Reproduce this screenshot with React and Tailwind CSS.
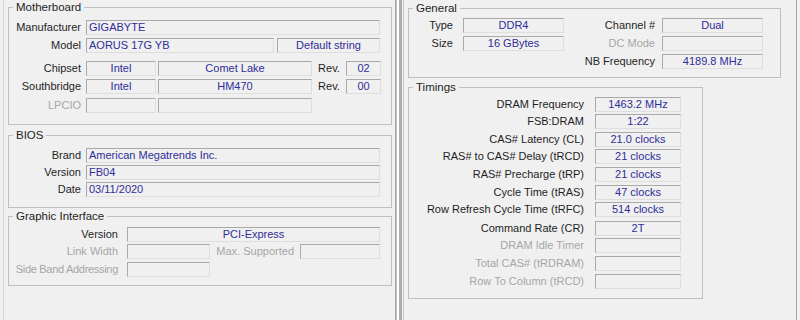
import React from "react";

const font = { fontFamily: '"Liberation Sans", Arial, sans-serif' };

function Field({ w, left, children }) {
  return (
    <div
      className={`${w} h-[15px] shrink-0 border border-t-[#a9a9a9] border-l-[#a9a9a9] border-b-[#dedede] border-r-[#dedede] leading-[13px] text-[#2e2e99] whitespace-nowrap overflow-hidden ${
        left ? "pl-[2px] text-left" : "text-center"
      }`}
    >
      {children}
    </div>
  );
}

function Label({ w, dim, children, center, tight }) {
  return (
    <div
      className={`${w} shrink-0 h-[15px] leading-[15px] whitespace-nowrap ${center ? "text-center" : "text-right"} ${
        dim ? "text-[#a6a6a6]" : "text-[#1e1e1e]"
      } ${tight ? "tracking-[-0.3px]" : ""}`}
    >
      {children}
    </div>
  );
}

function Group({ title, className, children }) {
  return (
    <fieldset className={`border border-[#bfbfbf] shrink-0 ${className}`}>
      <legend className="ml-[4px] px-[3px] leading-[14px] text-[11.5px] text-[#1e1e1e]">{title}</legend>
      {children}
    </fieldset>
  );
}

const timings = [
  ["DRAM Frequency", "1463.2 MHz", "", false],
  ["FSB:DRAM", "1:22", "mt-[2px]", false],
  ["CAS# Latency (CL)", "21.0 clocks", "mt-[3px]", false],
  ["RAS# to CAS# Delay (tRCD)", "21 clocks", "mt-[2px]", false],
  ["RAS# Precharge (tRP)", "21 clocks", "mt-[3px]", false],
  ["Cycle Time (tRAS)", "47 clocks", "mt-[3px]", false],
  ["Row Refresh Cycle Time (tRFC)", "514 clocks", "mt-[2px]", false],
  ["Command Rate (CR)", "2T", "mt-[4px]", false],
  ["DRAM Idle Timer", "", "mt-[2px]", true],
  ["Total CAS# (tRDRAM)", "", "mt-[3px]", true],
  ["Row To Column (tRCD)", "", "mt-[3px]", true],
];

export default function App() {
  return (
    <div className="flex h-[320px] w-[800px] bg-[#f0f0f0] text-[11px] overflow-hidden" style={font}>
      {/* left window - mainboard */}
      <div className="w-[3px] shrink-0" />
      <div className="w-[393px] shrink-0 border-l border-l-[#d6d6d6] border-r border-r-[#a3a3a3] pl-[4px] flex flex-col">
        <Group title="Motherboard" className="w-[384px] h-[125px]">
          <div className="flex flex-col pt-[6px]">
            <div className="flex">
              <Label w="w-[72px]">Manufacturer</Label>
              <div className="w-[5px]" />
              <Field w="w-[294px]" left>GIGABYTE</Field>
            </div>
            <div className="flex mt-[3px]">
              <Label w="w-[72px]">Model</Label>
              <div className="w-[5px]" />
              <Field w="w-[188px]" left>AORUS 17G YB</Field>
              <div className="w-[3px]" />
              <Field w="w-[103px]">Default string</Field>
            </div>
            <div className="flex mt-[8px]">
              <Label w="w-[72px]">Chipset</Label>
              <div className="w-[5px]" />
              <Field w="w-[70px]">Intel</Field>
              <div className="w-[2px]" />
              <Field w="w-[154px]">Comet Lake</Field>
              <Label w="w-[34px]" center>Rev.</Label>
              <Field w="w-[35px]">02</Field>
            </div>
            <div className="flex mt-[3px]">
              <Label w="w-[72px]">Southbridge</Label>
              <div className="w-[5px]" />
              <Field w="w-[70px]">Intel</Field>
              <div className="w-[2px]" />
              <Field w="w-[154px]">HM470</Field>
              <Label w="w-[34px]" center>Rev.</Label>
              <Field w="w-[35px]">00</Field>
            </div>
            <div className="flex mt-[4px]">
              <Label w="w-[72px]" dim>LPCIO</Label>
              <div className="w-[5px]" />
              <Field w="w-[70px]" />
              <div className="w-[2px]" />
              <Field w="w-[154px]" />
            </div>
          </div>
        </Group>

        <Group title="BIOS" className="w-[384px] h-[80px] mt-[3px]">
          <div className="flex flex-col pt-[6px]">
            <div className="flex">
              <Label w="w-[72px]">Brand</Label>
              <div className="w-[5px]" />
              <Field w="w-[294px]" left>American Megatrends Inc.</Field>
            </div>
            <div className="flex mt-[2px]">
              <Label w="w-[72px]">Version</Label>
              <div className="w-[5px]" />
              <Field w="w-[294px]" left>FB04</Field>
            </div>
            <div className="flex mt-[2px]">
              <Label w="w-[72px]">Date</Label>
              <div className="w-[5px]" />
              <Field w="w-[294px]" left>03/11/2020</Field>
            </div>
          </div>
        </Group>

        <Group title="Graphic Interface" className="w-[384px] h-[77px] mt-[1px]">
          <div className="flex flex-col pt-[4px]">
            <div className="flex">
              <Label w="w-[109px]">Version</Label>
              <div className="w-[9px]" />
              <Field w="w-[253px]">PCI-Express</Field>
            </div>
            <div className="flex mt-[2px]">
              <Label w="w-[109px]" dim>Link Width</Label>
              <div className="w-[9px]" />
              <Field w="w-[83px]" />
              <Label w="w-[84px]" dim>Max. Supported</Label>
              <div className="w-[6px]" />
              <Field w="w-[80px]" />
            </div>
            <div className="flex mt-[3px]">
              <Label w="w-[109px]" dim tight>Side Band Addressing</Label>
              <div className="w-[9px]" />
              <Field w="w-[83px]" />
            </div>
          </div>
        </Group>
      </div>

      {/* divider between the two windows */}
      <div className="w-[1px] shrink-0 bg-[#c2c2c2]" />
      <div className="w-[2px] shrink-0 bg-white" />
      <div className="w-[3px] shrink-0 bg-[#acacac]" />
      <div className="w-[1px] shrink-0" />
      <div className="w-[1px] shrink-0 bg-[#cacaca]" />

      {/* right window - memory */}
      <div className="w-[393px] shrink-0 border-r border-r-[#a3a3a3] pl-[4px] flex flex-col">
        <Group title="General" className="w-[373px] h-[77px] mt-[1px]">
          <div className="flex flex-col pt-[3px]">
            <div className="flex">
              <Label w="w-[44px]">Type</Label>
              <div className="w-[10px]" />
              <Field w="w-[101px]">DDR4</Field>
              <Label w="w-[91px]">Channel #</Label>
              <div className="w-[7px]" />
              <Field w="w-[101px]">Dual</Field>
            </div>
            <div className="flex mt-[3px]">
              <Label w="w-[44px]">Size</Label>
              <div className="w-[10px]" />
              <Field w="w-[101px]">16 GBytes</Field>
              <Label w="w-[91px]" dim>DC Mode</Label>
              <div className="w-[7px]" />
              <Field w="w-[101px]" />
            </div>
            <div className="flex mt-[3px]">
              <div className="w-[155px]" />
              <Label w="w-[91px]">NB Frequency</Label>
              <div className="w-[7px]" />
              <Field w="w-[101px]">4189.8 MHz</Field>
            </div>
          </div>
        </Group>

        <Group title="Timings" className="w-[295px] h-[219px] mt-[2px]">
          <div className="flex flex-col pt-[3px]">
            {timings.map(([k, v, mt, dim]) => (
              <div key={k} className={`flex ${mt}`}>
                <Label w="w-[175px]" dim={dim}>{k}</Label>
                <div className="w-[11px]" />
                <Field w="w-[86px]">{v}</Field>
              </div>
            ))}
          </div>
        </Group>
      </div>
    </div>
  );
}
